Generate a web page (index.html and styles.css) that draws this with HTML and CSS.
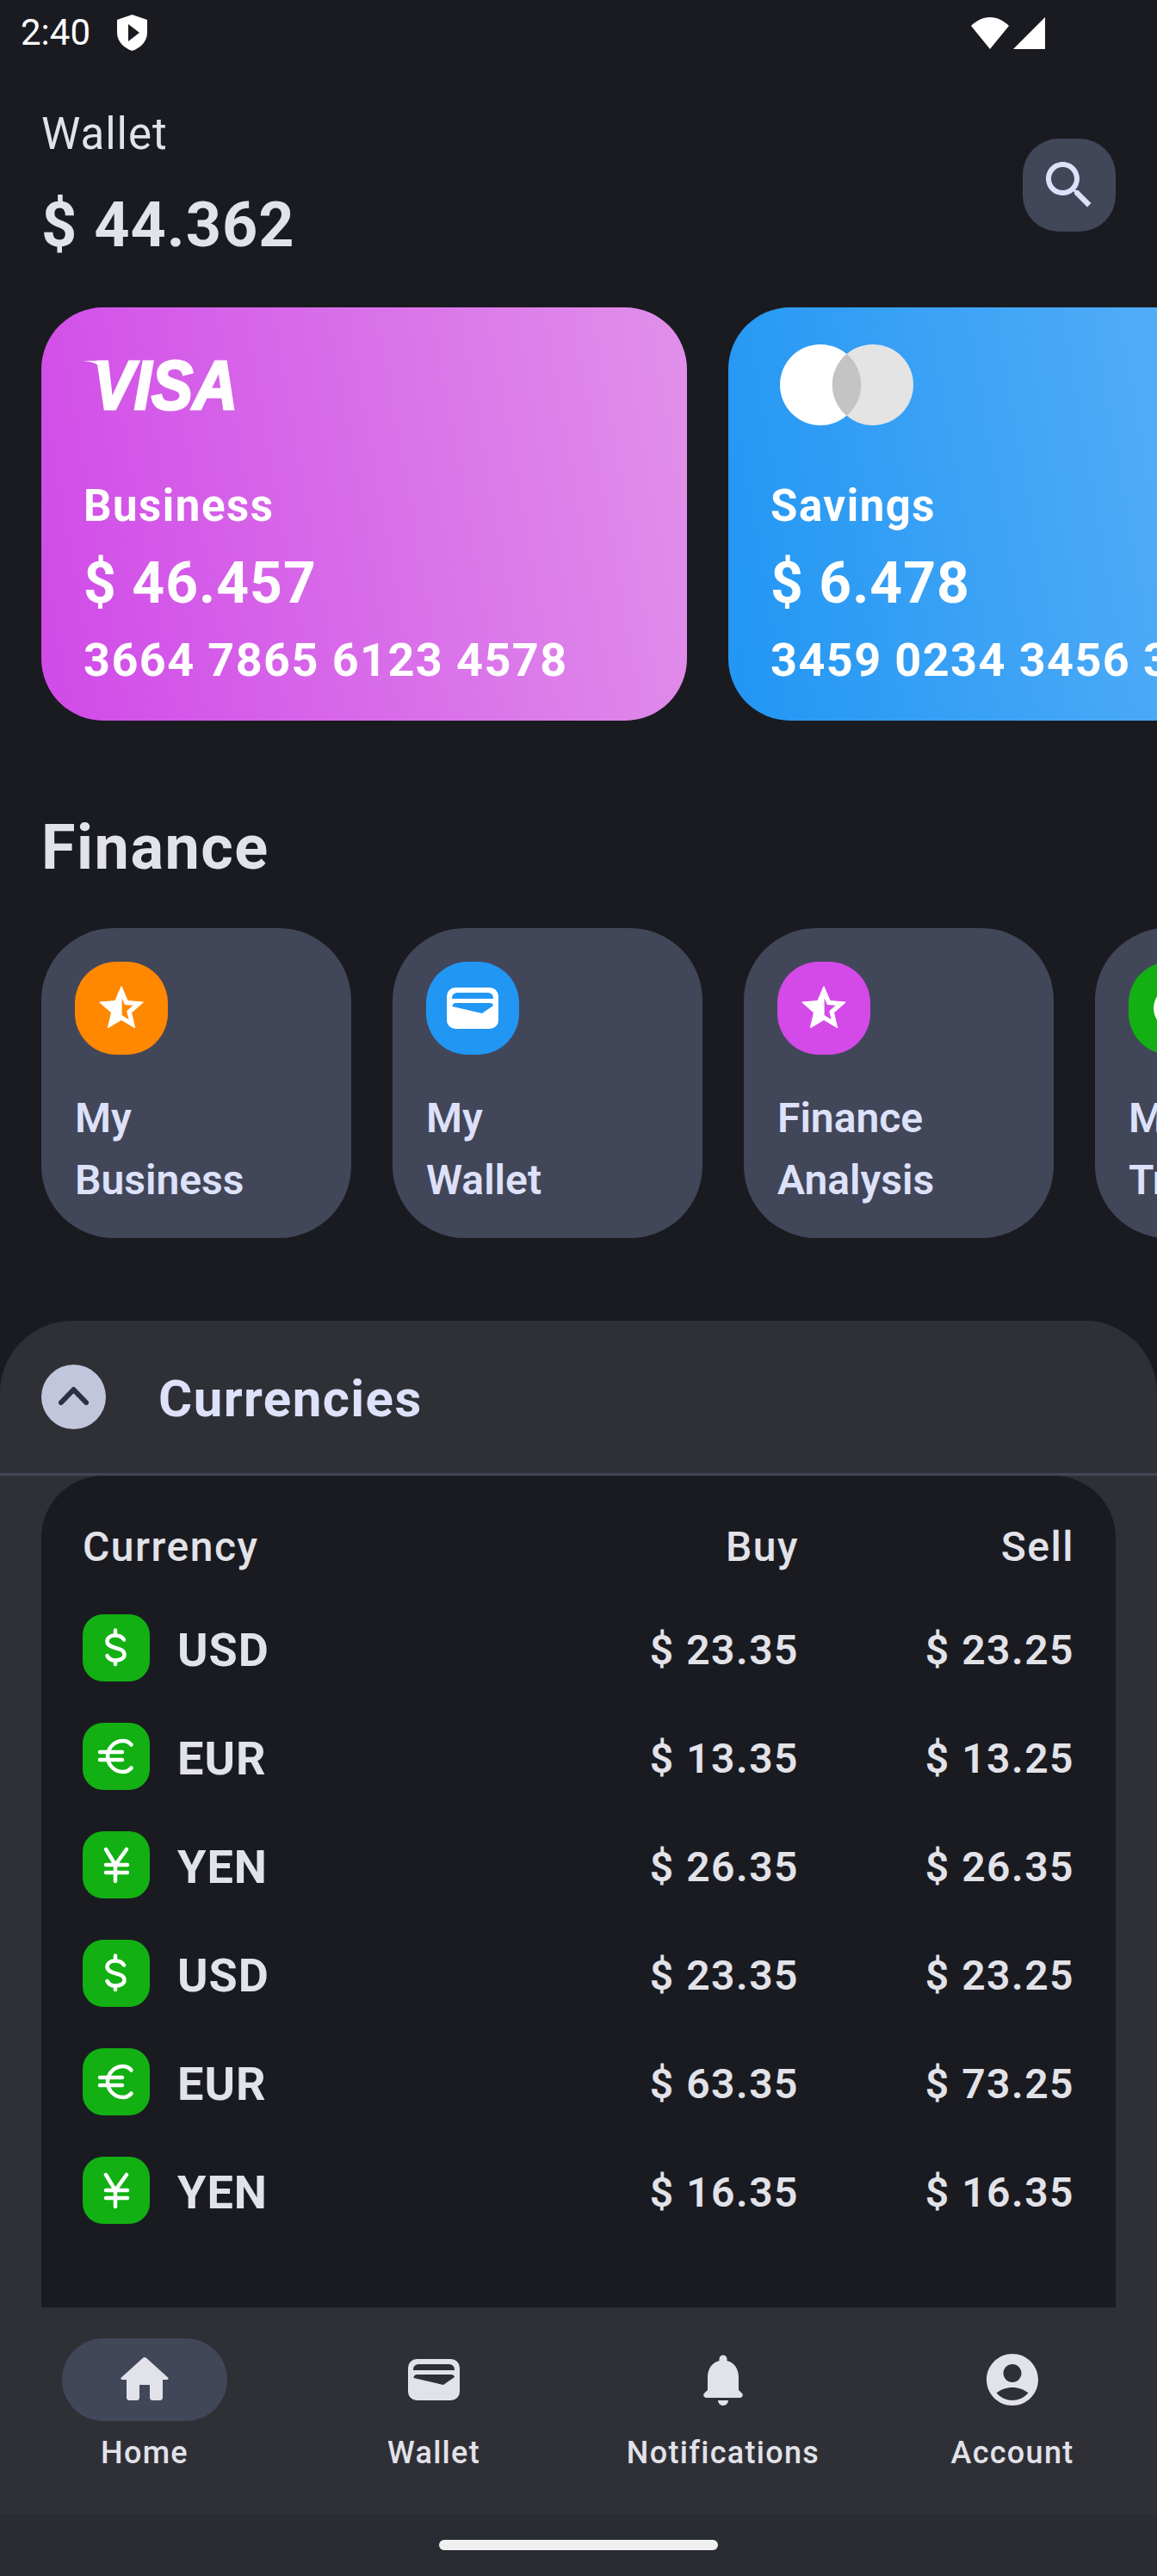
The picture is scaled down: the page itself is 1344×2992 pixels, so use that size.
FILE: index.html
```html
<!DOCTYPE html>
<html lang="en">
<head>
    <meta charset="UTF-8">
    <meta name="viewport" content="width=device-width, initial-scale=1.0">
    <title>Wallet</title>
    <link rel="stylesheet" href="styles.css">
</head>
<body>
<svg class="defs">
    <symbol id="i-star" viewBox="0 0 24 24"><path d="M22 9.24l-7.19-.62L12 2 9.19 8.63 2 9.24l5.46 4.73L5.82 21 12 17.27 18.18 21l-1.63-7.03L22 9.24zM12 15.4V6.1l1.71 4.04 4.38.38-3.32 2.88 1 4.28L12 15.4z" fill="currentColor" stroke="currentColor" stroke-width=".5" stroke-linejoin="round"/></symbol>
    <symbol id="i-wallet" viewBox="0 0 72 72"><path fill-rule="evenodd" fill="currentColor" d="M16 12H56A10 10 0 0 1 66 22V50A10 10 0 0 1 56 60H16A10 10 0 0 1 6 50V22A10 10 0 0 1 16 12ZM18 18A6 6 0 0 0 12 24V25H60V24A6 6 0 0 0 54 18ZM16 30A4 4 0 0 0 12.500 34L47 42L60 33A4 4 0 0 0 56 30Z"/></symbol>
    <symbol id="i-dollar" viewBox="0 0 78 78"><path d="M48 29.500C46 26 43 24.500 38 24.500C32 24.500 28.500 27.500 28.500 31.500C28.500 36 33 37.500 38 39C44 40.500 48.500 42 48.500 47C48.500 51 44 53.500 38 53.500C33 53.500 30 51.500 28.500 48M38 18.500V24.500M38 53.500V58" fill="none" stroke="#fff" stroke-width="4.500" stroke-linecap="round"/></symbol>
    <symbol id="i-euro" viewBox="0 0 78 78"><path d="M56.500 25.500C54 22.500 50.500 21 47 21C37 21 29 29 29 39C29 49 37 57 47 57C50.500 57 54 55.500 56.500 52.500M20 34H46M20 43H46" fill="none" stroke="#fff" stroke-width="4.500" stroke-linecap="round"/></symbol>
    <symbol id="i-yen" viewBox="0 0 78 78"><path d="M27 21L38 39L51 21M38 39V58M27 39H52M27 48H52" fill="none" stroke="#fff" stroke-width="4.500" stroke-linecap="round" stroke-linejoin="round"/></symbol>
</svg>

<div class="status">
    <span class="clock">2:40</span>
    <svg class="shield" viewBox="0 0 35 42"><path d="M17.500 0L35 6V21C35 31 27 39 17.500 42C8 39 0 31 0 21V6Z" fill="#fff"/><path d="M13 11L26 21L13 31Z" fill="#1a1b21"/></svg>
    <div class="status-right">
        <svg class="wifi" viewBox="0 0 44 37"><path d="M22 37L0 10C6 4 14 0 22 0C30 0 38 4 44 10Z" fill="#fff"/></svg>
        <svg class="signal" viewBox="0 0 37 37"><path d="M37 0V37H0Z" fill="#fff"/></svg>
    </div>
</div>

<header class="head">
    <div>
        <div class="head-label">Wallet</div>
        <div class="head-total">$ 44.362</div>
    </div>
    <button class="search">
        <svg viewBox="0 0 24 24"><path d="M15.500 14h-.79l-.28-.27C15.410 12.590 16 11.110 16 9.500 16 5.910 13.090 3 9.500 3S3 5.910 3 9.500 5.910 16 9.500 16c1.610 0 3.090-.59 4.230-1.570l.27.28v.79l5 4.990L20.490 19l-4.990-5zm-6 0C7.010 14 5 11.990 5 9.500S7.010 5 9.500 5 14 7.010 14 9.500 11.990 14 9.500 14z" fill="currentColor"/></svg>
    </button>
</header>

<section class="cards">
    <div class="card card-visa">
        <svg class="logo-visa" viewBox="0 0 180 60">
            <path d="M0 2C12 3 20 6 24 14L20 2Z" fill="#fff"/>
            <text x="12" y="58" textLength="168" lengthAdjust="spacingAndGlyphs">VISA</text>
        </svg>
        <div class="card-name">Business</div>
        <div class="card-amount">$ 46.457</div>
        <div class="card-number">3664 7865 6123 4578</div>
    </div>
    <div class="card card-master">
        <svg class="logo-master" viewBox="0 0 155 94">
            <circle cx="47" cy="47" r="47" fill="#fff"/>
            <circle cx="108" cy="47" r="47" fill="#e4e4e4"/>
            <path d="M77.500 11A47 47 0 0 1 77.500 83A47 47 0 0 1 77.500 11Z" fill="#c4c4c4"/>
        </svg>
        <div class="card-name">Savings</div>
        <div class="card-amount">$ 6.478</div>
        <div class="card-number">3459 0234 3456 3456</div>
    </div>
</section>

<h2 class="section-title">Finance</h2>

<section class="tiles">
    <div class="tile">
        <div class="tile-icon orange"><svg><use href="#i-star"/></svg></div>
        <div class="tile-text">My<br>Business</div>
    </div>
    <div class="tile">
        <div class="tile-icon blue"><svg class="wallet-glyph"><use href="#i-wallet"/></svg></div>
        <div class="tile-text">My<br>Wallet</div>
    </div>
    <div class="tile">
        <div class="tile-icon purple"><svg><use href="#i-star"/></svg></div>
        <div class="tile-text">Finance<br>Analysis</div>
    </div>
    <div class="tile">
        <div class="tile-icon green"><svg viewBox="0 0 24 24"><circle cx="12" cy="12" r="10" fill="#fff"/></svg></div>
        <div class="tile-text">My<br>Transactions</div>
    </div>
</section>

<section class="panel">
    <div class="panel-head">
        <span class="chevron">
            <svg viewBox="0 0 75 75"><path d="M23 44L37.500 29L52 44" fill="none" stroke="#2b3042" stroke-width="6" stroke-linecap="round" stroke-linejoin="round"/></svg>
        </span>
        <span class="panel-title">Currencies</span>
    </div>
    <div class="rates">
        <div class="rate-row rate-head"><span>Currency</span><span class="num">Buy</span><span class="num">Sell</span></div>
        <div class="rate-row">
            <span class="cur"><span class="cur-icon"><svg><use href="#i-dollar"/></svg></span>USD</span>
            <span class="num">$ 23.35</span><span class="num">$ 23.25</span>
        </div>
        <div class="rate-row">
            <span class="cur"><span class="cur-icon"><svg><use href="#i-euro"/></svg></span>EUR</span>
            <span class="num">$ 13.35</span><span class="num">$ 13.25</span>
        </div>
        <div class="rate-row">
            <span class="cur"><span class="cur-icon"><svg><use href="#i-yen"/></svg></span>YEN</span>
            <span class="num">$ 26.35</span><span class="num">$ 26.35</span>
        </div>
        <div class="rate-row">
            <span class="cur"><span class="cur-icon"><svg><use href="#i-dollar"/></svg></span>USD</span>
            <span class="num">$ 23.35</span><span class="num">$ 23.25</span>
        </div>
        <div class="rate-row">
            <span class="cur"><span class="cur-icon"><svg><use href="#i-euro"/></svg></span>EUR</span>
            <span class="num">$ 63.35</span><span class="num">$ 73.25</span>
        </div>
        <div class="rate-row">
            <span class="cur"><span class="cur-icon"><svg><use href="#i-yen"/></svg></span>YEN</span>
            <span class="num">$ 16.35</span><span class="num">$ 16.35</span>
        </div>
    </div>
</section>

<nav class="nav">
    <div class="nav-item">
        <span class="nav-icon active"><svg viewBox="0 0 24 24"><path d="M10 19v-5h4v5c0 .55.45 1 1 1h3c.55 0 1-.45 1-1v-7h1.700c.46 0 .68-.57.33-.87L12.670 3.600c-.38-.34-.96-.34-1.340 0l-8.360 7.530c-.34.3-.13.87.33.87H5v7c0 .55.45 1 1 1h3c.55 0 1-.45 1-1z" fill="currentColor"/></svg></span>
        <span>Home</span>
    </div>
    <div class="nav-item">
        <span class="nav-icon"><svg><use href="#i-wallet"/></svg></span>
        <span>Wallet</span>
    </div>
    <div class="nav-item">
        <span class="nav-icon"><svg viewBox="0 0 24 24"><path d="M12 22c1.100 0 2-.9 2-2h-4c0 1.100.9 2 2 2zm6-6v-5c0-3.070-1.630-5.640-4.500-6.320V4c0-.83-.67-1.500-1.500-1.500s-1.500.67-1.500 1.500v.68C7.640 5.360 6 7.920 6 11v5l-1.290 1.290c-.63.63-.19 1.710.7 1.710h13.170c.89 0 1.340-1.080.71-1.710L18 16z" fill="currentColor"/></svg></span>
        <span>Notifications</span>
    </div>
    <div class="nav-item">
        <span class="nav-icon"><svg viewBox="0 0 24 24"><path d="M12 2C6.480 2 2 6.480 2 12s4.480 10 10 10 10-4.480 10-10S17.520 2 12 2zm0 4c1.930 0 3.500 1.570 3.500 3.500S13.930 13 12 13s-3.500-1.570-3.500-3.500S10.070 6 12 6zm0 14c-2.030 0-4.430-.82-6.140-2.880C7.550 15.800 9.680 15 12 15s4.450.8 6.140 2.120C16.430 19.180 14.030 20 12 20z" fill="currentColor"/></svg></span>
        <span>Account</span>
    </div>
</nav>

<div class="gesture"><span></span></div>
</body>
</html>
```

FILE: styles.css
```css
*{
    box-sizing: border-box;
}
html, body{
    margin: 0;
    height: 100%;
    overflow: hidden;
}
body{
    width: 1344px;
    height: 2992px;
    display: flex;
    flex-direction: column;
    background: #1a1b21;
    color: #e2e2e9;
    font-family: Roboto, "Noto Sans", sans-serif;
}
.defs{
    display: none;
}

/* status bar */
.status{
    height: 96px;
    flex: none;
    display: flex;
    align-items: center;
    padding: 0 130px 20px 24px;
    color: #fff;
}
.clock{
    font-size: 42px;
    line-height: 42px;
}
.shield{
    width: 35px;
    height: 42px;
    margin-left: 31px;
}
.status-right{
    margin-left: auto;
    display: flex;
    gap: 5px;
}
.wifi{
    width: 44px;
    height: 37px;
}
.signal{
    width: 37px;
    height: 37px;
}

/* header */
.head{
    flex: none;
    height: 238px;
    display: flex;
    justify-content: space-between;
    align-items: center;
    padding: 0 48px 0 48px;
}
.head-label{
    font-size: 51px;
    line-height: 72px;
    letter-spacing: 1px;
}
.head-total{
    margin-top: 22px;
    font-size: 72px;
    line-height: 96px;
    font-weight: 700;
    letter-spacing: 1px;
}
.search{
    width: 108px;
    height: 108px;
    padding: 18px;
    border: 0;
    border-radius: 42px;
    background: #424659;
    color: #dde1f9;
}
.search svg{
    display: block;
    width: 72px;
    height: 72px;
}

/* cards */
.cards{
    flex: none;
    display: flex;
    gap: 48px;
    padding-left: 48px;
    margin-top: 23px;
    overflow: hidden;
}
.card{
    flex: none;
    width: 750px;
    height: 480px;
    padding: 42px 48px 0 49px;
    border-radius: 72px;
    color: #fff;
}
.card-visa{
    background: linear-gradient(80deg, #d04ae8, #e190ea);
}
.card-master{
    background: linear-gradient(80deg, #2196f3, #66b6fa);
}
.logo-visa{
    display: block;
    width: 180px;
    height: 60px;
    margin: 18px 0 0 -1px;
    overflow: visible;
}
.logo-visa text{
    font-family: "Liberation Sans", sans-serif;
    font-size: 80px;
    font-weight: 700;
    font-style: italic;
    fill: #fff;
    stroke: #fff;
    stroke-width: 3px;
}
.logo-master{
    display: block;
    width: 155px;
    height: 94px;
    margin: 1px 0 -17px 11px;
}
.card-name{
    margin-top: 79px;
    font-size: 51px;
    line-height: 64px;
    font-weight: 700;
    letter-spacing: 1.500px;
}
.card-amount{
    margin-top: 16px;
    font-size: 66px;
    line-height: 84px;
    font-weight: 700;
    letter-spacing: 1px;
}
.card-number{
    margin-top: 11px;
    font-size: 54px;
    line-height: 72px;
    font-weight: 700;
    letter-spacing: 1.400px;
}

/* finance tiles */
.section-title{
    flex: none;
    margin: 100px 0 0 48px;
    font-size: 72px;
    line-height: 96px;
    font-weight: 700;
    letter-spacing: 1.500px;
}
.tiles{
    flex: none;
    display: flex;
    gap: 48px;
    padding-left: 48px;
    margin-top: 45px;
    overflow: hidden;
}
.tile{
    flex: none;
    width: 360px;
    height: 360px;
    padding: 39px 39px 0 39px;
    border-radius: 84px;
    background: #424659;
    overflow: hidden;
}
.tile-icon{
    width: 108px;
    height: 108px;
    border-radius: 48px;
    display: flex;
    align-items: center;
    justify-content: center;
    color: #fff;
}
.tile-icon svg{
    width: 60px;
    height: 60px;
}
.tile-icon .wallet-glyph{
    width: 72px;
    height: 72px;
}
.orange{
    background: #ff8800;
}
.blue{
    background: #2196f3;
}
.purple{
    background: #d34ae8;
}
.green{
    background: #12b012;
}
.tile-text{
    margin-top: 38px;
    font-size: 48px;
    line-height: 72px;
    font-weight: 600;
    color: #dde1f9;
    white-space: nowrap;
}

/* currencies */
.panel{
    flex: 1;
    min-height: 0;
    margin-top: 96px;
    border-radius: 84px 84px 0 0;
    background: #2f3036;
    overflow: hidden;
}
.panel-head{
    height: 180px;
    display: flex;
    align-items: center;
    gap: 61px;
    padding: 0 48px 0 48px;
    border-bottom: 3px solid #424659;
}
.chevron{
    width: 75px;
    height: 75px;
    border-radius: 50%;
    background: #c1c6dd;
}
.chevron svg{
    display: block;
    width: 75px;
    height: 75px;
}
.panel-title{
    margin-top: 3px;
    font-size: 60px;
    font-weight: 700;
    letter-spacing: 1.400px;
    color: #dde1f9;
}
.rates{
    height: 1200px;
    margin: 0 48px;
    padding: 43px 48px 0 48px;
    border-radius: 72px 72px 0 0;
    background: #1a1b21;
}
.rate-row{
    display: grid;
    grid-template-columns: 1fr 200px 320px;
    align-items: center;
    height: 126px;
    font-size: 48px;
    font-weight: 600;
    letter-spacing: 1.500px;
}
.rate-head{
    height: 78px;
    margin-bottom: 18px;
    font-weight: 500;
}
.num{
    text-align: right;
}
.cur{
    display: flex;
    align-items: center;
    gap: 32px;
    font-size: 54px;
    font-weight: 700;
    letter-spacing: 1px;
}
.cur-icon{
    width: 78px;
    height: 78px;
    margin-bottom: 4px;
    border-radius: 24px;
    background: #12b012;
}
.cur-icon svg{
    display: block;
    width: 78px;
    height: 78px;
}

/* bottom nav */
.nav{
    flex: none;
    height: 240px;
    display: grid;
    grid-template-columns: repeat(4, 1fr);
    background: #2f3036;
    font-size: 36px;
    font-weight: 500;
    letter-spacing: 1.300px;
}
.nav-item{
    display: flex;
    flex-direction: column;
    align-items: center;
    padding-top: 36px;
    gap: 16px;
}
.nav-icon{
    width: 192px;
    height: 96px;
    border-radius: 48px;
    display: flex;
    align-items: center;
    justify-content: center;
}
.nav-icon.active{
    background: #424659;
}
.nav-icon svg{
    width: 72px;
    height: 72px;
}
.gesture{
    flex: none;
    height: 72px;
    padding-top: 30px;
    background: #292c33;
    display: flex;
    justify-content: center;
}
.gesture span{
    width: 324px;
    height: 12px;
    border-radius: 6px;
    background: #f0f0f0;
}
```
